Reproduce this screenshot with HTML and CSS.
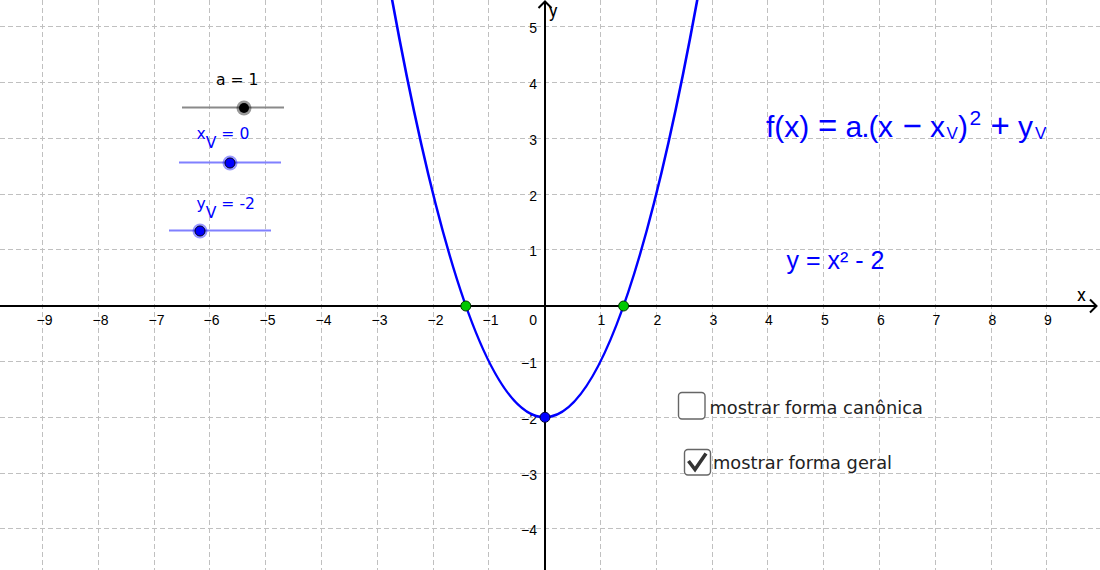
FILE: index.html
```html
<!DOCTYPE html>
<html lang="pt">
<head>
<meta charset="utf-8">
<title>Função quadrática</title>
<link rel="stylesheet" href="styles.css">
</head>
<body>
<div class="stage">
<svg class="canvas" width="1100" height="570" viewBox="0 0 1100 570" xmlns="http://www.w3.org/2000/svg">
  <g class="grid">
    <line x1="42.5" y1="0" x2="42.5" y2="570"/>
    <line x1="98.5" y1="0" x2="98.5" y2="570"/>
    <line x1="154.5" y1="0" x2="154.5" y2="570"/>
    <line x1="209.5" y1="0" x2="209.5" y2="570"/>
    <line x1="265.5" y1="0" x2="265.5" y2="570"/>
    <line x1="321.5" y1="0" x2="321.5" y2="570"/>
    <line x1="377.5" y1="0" x2="377.5" y2="570"/>
    <line x1="433.5" y1="0" x2="433.5" y2="570"/>
    <line x1="488.5" y1="0" x2="488.5" y2="570"/>
    <line x1="600.5" y1="0" x2="600.5" y2="570"/>
    <line x1="656.5" y1="0" x2="656.5" y2="570"/>
    <line x1="712.5" y1="0" x2="712.5" y2="570"/>
    <line x1="767.5" y1="0" x2="767.5" y2="570"/>
    <line x1="823.5" y1="0" x2="823.5" y2="570"/>
    <line x1="879.5" y1="0" x2="879.5" y2="570"/>
    <line x1="935.5" y1="0" x2="935.5" y2="570"/>
    <line x1="991.5" y1="0" x2="991.5" y2="570"/>
    <line x1="1046.5" y1="0" x2="1046.5" y2="570"/>
    <line x1="0" y1="26.5" x2="1100" y2="26.5"/>
    <line x1="0" y1="82.5" x2="1100" y2="82.5"/>
    <line x1="0" y1="138.5" x2="1100" y2="138.5"/>
    <line x1="0" y1="194.5" x2="1100" y2="194.5"/>
    <line x1="0" y1="249.5" x2="1100" y2="249.5"/>
    <line x1="0" y1="361.5" x2="1100" y2="361.5"/>
    <line x1="0" y1="417.5" x2="1100" y2="417.5"/>
    <line x1="0" y1="473.5" x2="1100" y2="473.5"/>
    <line x1="0" y1="528.5" x2="1100" y2="528.5"/>
  </g>

  <g class="axes">
    <line x1="0" y1="306" x2="1096" y2="306"/>
    <line x1="545" y1="570" x2="545" y2="1.5"/>
    <polyline points="1090,299.5 1096.5,306 1090,312.5"/>
    <polyline points="538.5,8 545,1.5 551.5,8"/>
  </g>

  <g class="ticks-x">
    <text x="44.5" y="325">−9</text>
    <text x="100.5" y="325">−8</text>
    <text x="156.5" y="325">−7</text>
    <text x="211.5" y="325">−6</text>
    <text x="267.5" y="325">−5</text>
    <text x="323.5" y="325">−4</text>
    <text x="379.5" y="325">−3</text>
    <text x="435.5" y="325">−2</text>
    <text x="490.5" y="325">−1</text>
    <text x="601.5" y="325">1</text>
    <text x="657.5" y="325">2</text>
    <text x="713.5" y="325">3</text>
    <text x="769" y="325">4</text>
    <text x="825" y="325">5</text>
    <text x="881" y="325">6</text>
    <text x="936.5" y="325">7</text>
    <text x="992.5" y="325">8</text>
    <text x="1048" y="325">9</text>
  </g>
  <g class="ticks-y">
    <text x="537" y="325">0</text>
    <text x="537" y="33">5</text>
    <text x="537" y="89">4</text>
    <text x="537" y="145">3</text>
    <text x="537" y="200.5">2</text>
    <text x="537" y="256">1</text>
    <text x="537" y="368">−1</text>
    <text x="537" y="423.5">−2</text>
    <text x="537" y="479.5">−3</text>
    <text x="537" y="535">−4</text>
  </g>
  <text class="axis-label" x="1077" y="301">x</text>
  <text class="axis-label" x="549" y="17">y</text>

  <path class="curve" d="M388.5,-20.2 Q544.7,854.8 700.9,-20.2"/>

  <circle class="pt-root" cx="465.8" cy="306" r="5"/>
  <circle class="pt-root" cx="623.6" cy="306" r="5"/>
  <circle class="pt-vertex" cx="545" cy="417.3" r="5"/>

  <!-- sliders -->
  <text class="slider-label black" x="216" y="84.5">a = 1</text>
  <line class="slider-track gray" x1="182" y1="107.5" x2="284" y2="107.5"/>
  <circle class="halo gray" cx="244" cy="108" r="7.5"/>
  <circle class="knob black" cx="244" cy="108" r="5"/>

  <text class="slider-label blue" x="196.5" y="138.5">x<tspan dy="9">V</tspan><tspan dy="-9"> = 0</tspan></text>
  <line class="slider-track lblue" x1="179" y1="162.5" x2="281" y2="162.5"/>
  <circle class="halo blue" cx="230" cy="163" r="7.5"/>
  <circle class="knob blue" cx="230" cy="163" r="5"/>

  <text class="slider-label blue" x="196.5" y="208.5">y<tspan dy="9">V</tspan><tspan dy="-9"> = -2</tspan></text>
  <line class="slider-track lblue" x1="169" y1="230.5" x2="271" y2="230.5"/>
  <circle class="halo blue" cx="200" cy="231" r="7.5"/>
  <circle class="knob blue" cx="200" cy="231" r="5"/>

  <!-- formula -->
  <text class="formula" y="137"><tspan x="766">f(x)</tspan><tspan class="op" x="818">=</tspan><tspan class="tight" x="845.5">a.(</tspan><tspan x="878">x</tspan><tspan class="op" x="902.5">−</tspan><tspan x="930">x</tspan><tspan class="sub" x="946.5" y="139">V</tspan><tspan x="958" y="137">)</tspan><tspan class="sup" x="969.5" y="125">2</tspan><tspan class="op" x="990.5" y="137">+</tspan><tspan x="1018">y</tspan><tspan class="sub" x="1035" y="139">V</tspan></text>

  <text class="general" x="786.5" y="268.5">y = x² - 2</text>

  <!-- checkboxes -->
  <rect class="checkbox" x="678.5" y="392.5" width="26.5" height="26.5" rx="3.5"/>
  <text class="check-label" x="709.5" y="413.5">mostrar forma canônica</text>

  <rect class="checkbox" x="684.5" y="449.5" width="26" height="25.5" rx="3.5"/>
  <polyline class="checkmark" points="688.5,461 695,469.5 706,453.5"/>
  <text class="check-label" x="713" y="468.5">mostrar forma geral</text>
</svg>
</div>
</body>
</html>
```
FILE: styles.css
```css
html, body {
  margin: 0;
  padding: 0;
  background: #ffffff;
  overflow: hidden;
}

.stage {
  width: 1100px;
  height: 570px;
  overflow: hidden;
  background: #ffffff;
}

.canvas {
  display: block;
}

.grid line {
  stroke: #c0c0c0;
  stroke-width: 1;
  stroke-dasharray: 5 3;
}

.axes line,
.axes polyline {
  stroke: #000000;
  stroke-width: 2;
  fill: none;
}

.ticks-x text,
.ticks-y text {
  font-family: "Liberation Sans", Arial, sans-serif;
  font-size: 14px;
  fill: #000000;
}

.ticks-x text {
  text-anchor: middle;
}

.ticks-y text {
  text-anchor: end;
}

.axis-label {
  font-family: Roboto, "Liberation Sans", sans-serif;
  font-size: 18px;
  fill: #000000;
}

.curve {
  fill: none;
  stroke: #0000ff;
  stroke-width: 2.6;
}

.pt-root {
  fill: #00c800;
  stroke: #003300;
  stroke-width: 1;
}

.pt-vertex {
  fill: #0000ff;
  stroke: #000033;
  stroke-width: 1;
}

.slider-label {
  font-family: "DejaVu Sans", "Liberation Sans", sans-serif;
  font-size: 15.6px;
}

.slider-label.black {
  fill: #000000;
}

.slider-label.blue {
  fill: #0000ff;
}

.slider-track {
  stroke-width: 2;
}

.slider-track.gray {
  stroke: #8a8a8a;
}

.slider-track.lblue {
  stroke: #8080ff;
}

.halo.gray {
  fill: rgba(0, 0, 0, 0.4);
}

.halo.blue {
  fill: rgba(0, 0, 255, 0.4);
}

.knob.black {
  fill: #000000;
}

.knob.blue {
  fill: #0000ff;
  stroke: #000022;
  stroke-width: 1;
}

.formula {
  font-family: "Liberation Sans", Arial, sans-serif;
  font-size: 30px;
  fill: #0000ff;
}

.formula .op {
  font-size: 33px;
}

.formula .tight {
  letter-spacing: -1px;
}

.formula .sub {
  font-size: 17px;
}

.formula .sup {
  font-size: 21px;
}

.general {
  font-family: "Liberation Sans", Arial, sans-serif;
  font-size: 25px;
  fill: #0000ff;
}

.checkbox {
  fill: #ffffff;
  stroke: #666666;
  stroke-width: 1.4;
}

.checkmark {
  fill: none;
  stroke: #333333;
  stroke-width: 3.6;
  stroke-linejoin: miter;
}

.check-label {
  font-family: "DejaVu Sans", "Liberation Sans", sans-serif;
  font-size: 17.8px;
  fill: #222222;
}
```
